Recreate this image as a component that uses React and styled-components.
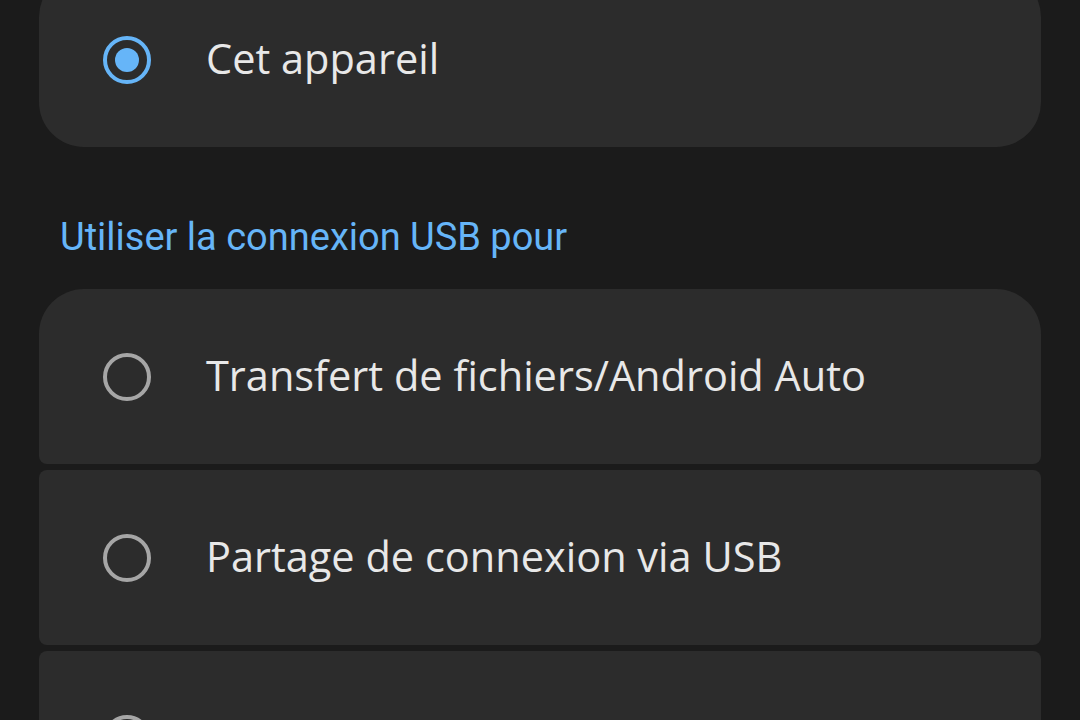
import React from 'react'
import styled, { createGlobalStyle } from 'styled-components'

const GlobalStyle = createGlobalStyle`
    html, body {
        margin: 0;
        padding: 0;
        background: #1b1b1b;
        overflow: hidden;
    }
`

const Page = styled.div`
    width: 1080px;
    height: 720px;
    overflow: hidden;
    padding: 0 39px;
    box-sizing: border-box;
    background: #1b1b1b;
`

const Group = styled.div`
    display: flex;
    flex-direction: column;
    gap: 6px;
`

const Card = styled.div`
    display: flex;
    align-items: center;
    height: ${({ $height }) => $height || 175}px;
    background: #2c2c2c;
    border-radius: ${({ $first }) => ($first ? '45px' : '8px')} ${({ $first }) => ($first ? '45px' : '8px')}
        ${({ $last }) => ($last ? '45px' : '8px')} ${({ $last }) => ($last ? '45px' : '8px')};
    padding-left: 64px;
    box-sizing: border-box;
`

const TopCard = styled(Card)`
    margin-top: -28px;
`

const Radio = styled.span`
    position: relative;
    flex: none;
    width: 48px;
    height: 48px;
    border-radius: 50%;
    border: 4px solid ${({ $checked }) => ($checked ? '#66b5f8' : '#a6a6a6')};
    box-sizing: border-box;

    &::after {
        content: '';
        display: ${({ $checked }) => ($checked ? 'block' : 'none')};
        position: absolute;
        left: 8px;
        top: 8px;
        width: 24px;
        height: 24px;
        border-radius: 50%;
        background: #66b5f8;
    }
`

const Label = styled.span`
    margin-left: 55px;
    margin-top: -3px;
    font-family: 'Open Sans', 'Noto Sans', sans-serif;
    font-size: 41.5px;
    font-weight: 500;
    color: #e8e8e8;
`

const Heading = styled.div`
    padding: 70px 0 32px 21px;
    font-family: Roboto, 'Liberation Sans', sans-serif;
    font-size: 38px;
    color: #66b5f8;
    line-height: 40px;
`

const options = [
    'Transfert de fichiers/Android Auto',
    'Partage de connexion via USB',
    '',
]

const App = () => {
    return (
        <Page>
            <GlobalStyle />
            <TopCard $first $last $height={175}>
                <Radio $checked />
                <Label>Cet appareil</Label>
            </TopCard>
            <Heading>Utiliser la connexion USB pour</Heading>
            <Group>
                {options.map((opt, i) => (
                    <Card key={i} $first={i === 0} $last={i === options.length - 1}>
                        <Radio />
                        {opt && <Label>{opt}</Label>}
                    </Card>
                ))}
            </Group>
        </Page>
    )
}

export default App
